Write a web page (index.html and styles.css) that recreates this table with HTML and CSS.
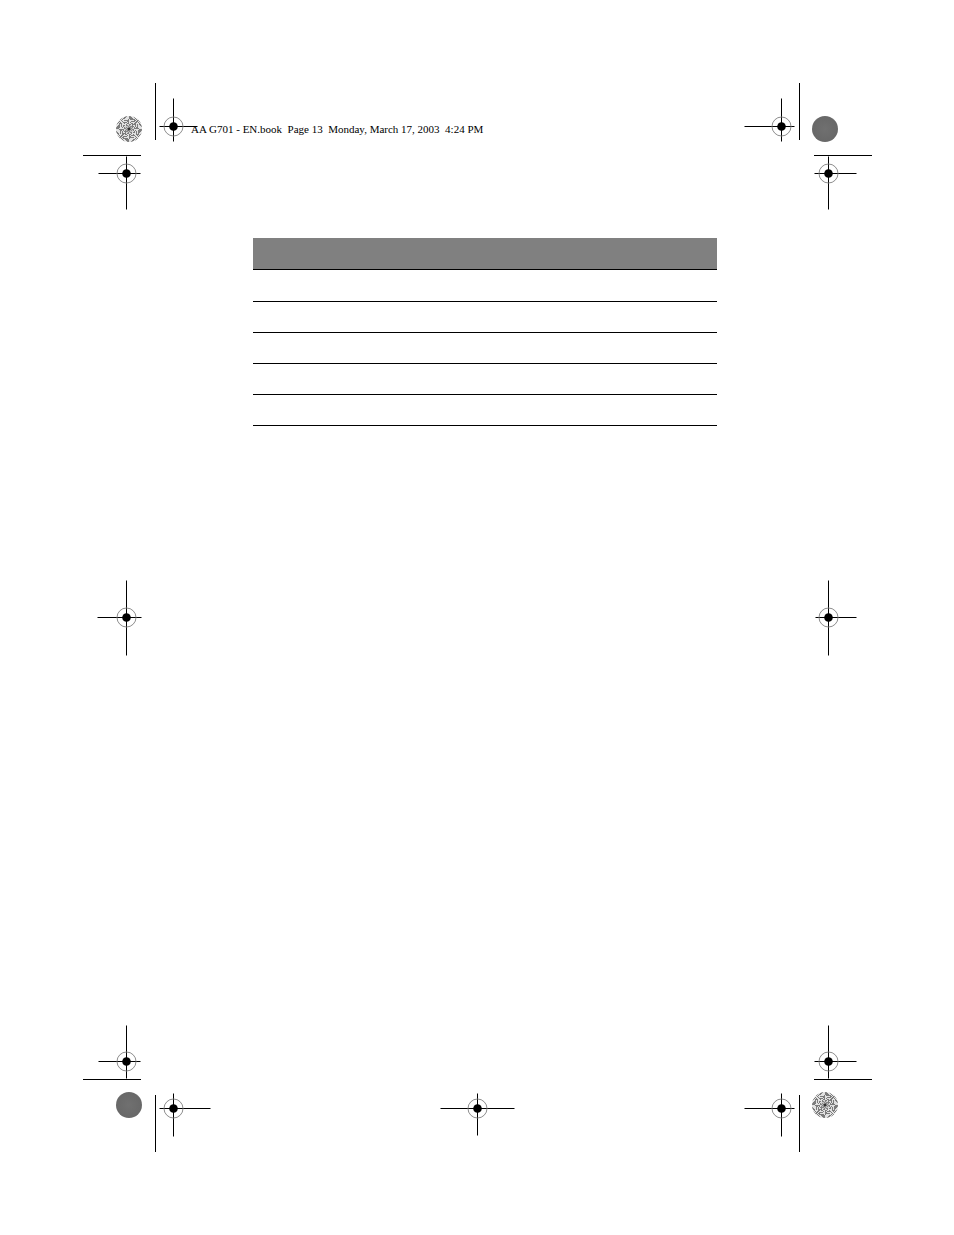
FILE: index.html
```html
<!DOCTYPE html>
<html>
<head>
<meta charset="utf-8">
<title>AA G701 - EN.book Page 13</title>
<link rel="stylesheet" href="styles.css">
</head>
<body>
<div class="page">
  <div class="slug">AA G701 - EN.book  Page 13  Monday, March 17, 2003  4:24 PM</div>

  <table class="grid">
    <thead>
      <tr><th></th></tr>
    </thead>
    <tbody>
      <tr class="first"><td></td></tr>
      <tr><td></td></tr>
      <tr><td></td></tr>
      <tr><td></td></tr>
      <tr><td></td></tr>
    </tbody>
  </table>

  <div class="star star-tl"></div>
  <div class="star star-br"></div>
  <div class="dot dot-tr"></div>
  <div class="dot dot-bl"></div>

  <svg class="marks" width="954" height="1235" viewBox="0 0 954 1235" xmlns="http://www.w3.org/2000/svg">
    <g class="crop">
      <line x1="155.5" y1="83" x2="155.5" y2="140"/>
      <line x1="83" y1="155.5" x2="141" y2="155.5"/>
      <line x1="799.5" y1="83" x2="799.5" y2="140"/>
      <line x1="814" y1="155.5" x2="872" y2="155.5"/>
      <line x1="83" y1="1079.5" x2="141" y2="1079.5"/>
      <line x1="155.5" y1="1095" x2="155.5" y2="1152"/>
      <line x1="814" y1="1079.5" x2="872" y2="1079.5"/>
      <line x1="799.5" y1="1095" x2="799.5" y2="1152"/>
    </g>

    <g class="target" transform="translate(173.5 126.5)">
      <line x1="-14" y1="0" x2="24" y2="0"/><line x1="0" y1="-28" x2="0" y2="15"/>
      <circle class="ring" r="9.5"/><circle class="core" r="4.3"/>
    </g>
    <g class="target" transform="translate(126.5 173.5)">
      <line x1="-28" y1="0" x2="14" y2="0"/><line x1="0" y1="-17" x2="0" y2="36"/>
      <circle class="ring" r="9.5"/><circle class="core" r="4.3"/>
    </g>
    <g class="target" transform="translate(781.5 126.5)">
      <line x1="-37" y1="0" x2="13" y2="0"/><line x1="0" y1="-28" x2="0" y2="15"/>
      <circle class="ring" r="9.5"/><circle class="core" r="4.3"/>
    </g>
    <g class="target" transform="translate(828.5 173.5)">
      <line x1="-14" y1="0" x2="28" y2="0"/><line x1="0" y1="-17" x2="0" y2="36"/>
      <circle class="ring" r="9.5"/><circle class="core" r="4.3"/>
    </g>
    <g class="target" transform="translate(126.5 617.5)">
      <line x1="-29" y1="0" x2="15" y2="0"/><line x1="0" y1="-37" x2="0" y2="38"/>
      <circle class="ring" r="9.5"/><circle class="core" r="4.3"/>
    </g>
    <g class="target" transform="translate(828.5 617.5)">
      <line x1="-13" y1="0" x2="28" y2="0"/><line x1="0" y1="-37" x2="0" y2="38"/>
      <circle class="ring" r="9.5"/><circle class="core" r="4.3"/>
    </g>
    <g class="target" transform="translate(126.5 1061.5)">
      <line x1="-28" y1="0" x2="14" y2="0"/><line x1="0" y1="-36" x2="0" y2="17"/>
      <circle class="ring" r="9.5"/><circle class="core" r="4.3"/>
    </g>
    <g class="target" transform="translate(173.5 1108.5)">
      <line x1="-14" y1="0" x2="37" y2="0"/><line x1="0" y1="-15" x2="0" y2="28"/>
      <circle class="ring" r="9.5"/><circle class="core" r="4.3"/>
    </g>
    <g class="target" transform="translate(477.5 1108.5)">
      <line x1="-37" y1="0" x2="37" y2="0"/><line x1="0" y1="-15" x2="0" y2="27"/>
      <circle class="ring" r="9.5"/><circle class="core" r="4.3"/>
    </g>
    <g class="target" transform="translate(781.5 1108.5)">
      <line x1="-37" y1="0" x2="13" y2="0"/><line x1="0" y1="-15" x2="0" y2="28"/>
      <circle class="ring" r="9.5"/><circle class="core" r="4.3"/>
    </g>
    <g class="target" transform="translate(828.5 1061.5)">
      <line x1="-14" y1="0" x2="28" y2="0"/><line x1="0" y1="-36" x2="0" y2="17"/>
      <circle class="ring" r="9.5"/><circle class="core" r="4.3"/>
    </g>
  </svg>
</div>
</body>
</html>
```

FILE: styles.css
```css
html, body {
  margin: 0;
  padding: 0;
  background: #ffffff;
}

.page {
  position: relative;
  width: 954px;
  height: 1235px;
  overflow: hidden;
  background: #ffffff;
  display: flex;
  flex-direction: column;
  align-items: flex-start;
}

.slug {
  margin: 123px 0 0 191px;
  font-family: "Liberation Serif", "Times New Roman", serif;
  font-size: 11px;
  line-height: 13px;
  color: #000000;
  white-space: pre;
}

.grid {
  margin: 102px 0 0 253px;
  width: 464px;
  border-collapse: collapse;
  border-spacing: 0;
}

.grid th {
  height: 31px;
  padding: 0;
  background: #808080;
  border-bottom: 1px solid #000000;
}

.grid td {
  height: 30px;
  padding: 0;
  border-bottom: 1px solid #000000;
}

.grid tr.first td {
  height: 31px;
}

.star,
.dot {
  position: absolute;
  width: 26px;
  height: 26px;
  border-radius: 50%;
}

.star {
  background:
    radial-gradient(circle, #333333 0 1.2px, transparent 1.8px),
    radial-gradient(circle, rgba(150,150,150,0.5) 0 3px, transparent 5px),
    repeating-conic-gradient(#7c7c7c 0deg 3deg, #e2e2e2 3deg 6deg);
}

.dot {
  background: radial-gradient(circle, #707070 0%, #686868 70%, #727272 100%);
}

.star-tl { left: 116px; top: 116px; }
.dot-tr  { left: 812px; top: 116px; }
.dot-bl  { left: 116px; top: 1092px; }
.star-br { left: 812px; top: 1092px; }

.marks {
  position: absolute;
  left: 0;
  top: 0;
  pointer-events: none;
}

.crop line,
.target line {
  stroke: #000000;
  stroke-width: 1;
}

.target .ring {
  fill: none;
  stroke: #808080;
  stroke-width: 0.9;
}

.target .core {
  fill: #000000;
}
```
